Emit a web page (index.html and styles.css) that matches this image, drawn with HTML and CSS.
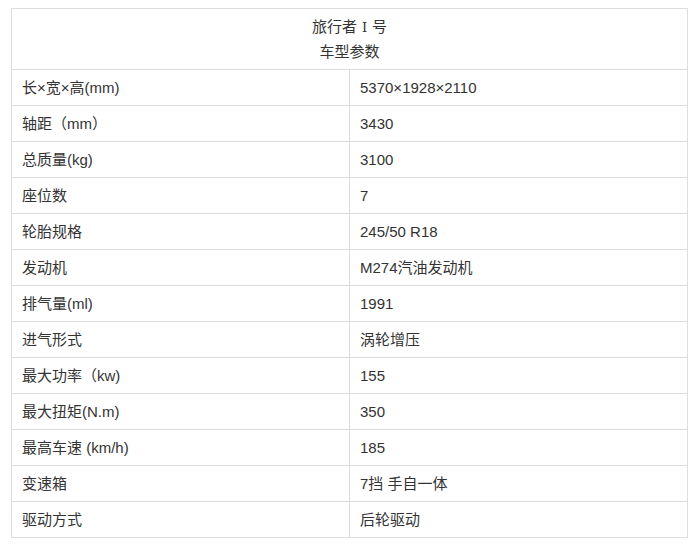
FILE: index.html
```html
<!DOCTYPE html>
<html lang="zh-CN">
<head>
<meta charset="utf-8">
<link rel="stylesheet" href="styles.css">
</head>
<body>
<table class="spec">
  <thead>
    <tr><th colspan="2"><p>旅行者<span class="roman">Ⅰ</span>号</p><p>车型参数</p></th></tr>
  </thead>
  <tbody>
    <tr><td>长×宽×高(mm)</td><td>5370×1928×2110</td></tr>
    <tr><td>轴距（mm）</td><td>3430</td></tr>
    <tr><td>总质量(kg)</td><td>3100</td></tr>
    <tr><td>座位数</td><td>7</td></tr>
    <tr><td>轮胎规格</td><td>245/50 R18</td></tr>
    <tr><td>发动机</td><td>M274汽油发动机</td></tr>
    <tr><td>排气量(ml)</td><td>1991</td></tr>
    <tr><td>进气形式</td><td>涡轮增压</td></tr>
    <tr><td>最大功率（kw)</td><td>155</td></tr>
    <tr><td>最大扭矩(N.m)</td><td>350</td></tr>
    <tr><td>最高车速 (km/h)</td><td>185</td></tr>
    <tr><td>变速箱</td><td>7挡 手自一体</td></tr>
    <tr><td>驱动方式</td><td>后轮驱动</td></tr>
  </tbody>
</table>
</body>
</html>
```
FILE: styles.css
```css
html, body {
  margin: 0;
  padding: 0;
  background: #fff;
}
body {
  padding: 8px 9px 0 11px;
  font-family: "Liberation Sans", "Noto Sans CJK SC", sans-serif;
  font-size: 15px;
  color: #333;
}
.spec {
  width: 677px;
  border-collapse: collapse;
  table-layout: fixed;
}
.spec th, .spec td {
  border: 1px solid #ddd;
  font-weight: normal;
  text-align: left;
  height: 36px;
  padding: 0 10px;
  box-sizing: border-box;
  line-height: 20px;
}
.spec th {
  text-align: center;
  height: 60px;
  padding: 6px 10px 5px;
}
.spec th p {
  margin: 0;
  line-height: 24px;
}
.spec td:first-child {
  width: 338px;
}
.roman {
  font-family: "DejaVu Serif", "Noto Sans CJK SC", serif;
  font-size: 13px;
  margin: 0 5px;
}
```
